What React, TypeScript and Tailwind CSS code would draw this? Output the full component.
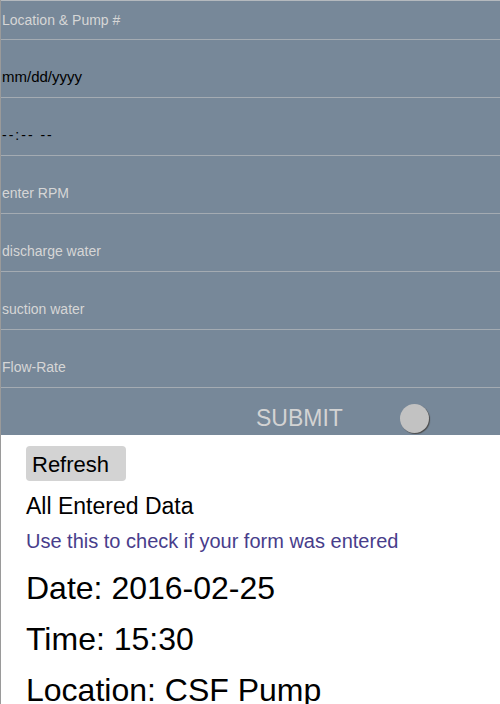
import React from "react";

const fields = [
  { text: "Location & Pump #", cls: "text-[14px] text-[#d6d6d6]" },
  { text: "mm/dd/yyyy", cls: "text-[15px] text-black" },
  { text: "--:-- --", cls: "text-[14px] text-black tracking-[2px]" },
  { text: "enter RPM", cls: "text-[14px] text-[#d6d6d6]" },
  { text: "discharge water", cls: "text-[14px] text-[#d6d6d6]" },
  { text: "suction water", cls: "text-[14px] text-[#d6d6d6]" },
  { text: "Flow-Rate", cls: "text-[14px] text-[#d6d6d6]" },
];

export default function App() {
  return (
    <div className="w-[500px] h-[704px] overflow-hidden bg-white border-l border-[#9a9a9a] font-['Liberation_Sans',Arial,sans-serif]">
      <div className="bg-[#778899] border-t border-[#b4b9be]">
        {fields.map((f, i) => (
          <div
            key={i}
            className={`${i === 0 ? "h-[39px]" : "mt-[18px] h-[40px]"} flex items-center pl-[1px] border-b border-[#a4abb2]`}
          >
            <span className={f.cls}>{f.text}</span>
          </div>
        ))}
        <div className="h-[47px] pt-[13px] flex items-center pl-[255px]">
          <span className="text-[23px] text-[#d3d3d3]">SUBMIT</span>
          <div className="ml-[57px] w-[29px] h-[29px] rounded-full bg-[#c2c2c2] shadow-[1px_1px_1px_#4a4a4a]" />
        </div>
      </div>
      <div className="pl-[25px]">
        <button className="mt-[11px] w-[100px] h-[35px] rounded-[4px] bg-[#d3d3d3] text-left pl-[6px] pt-[2px] text-[22px] text-black leading-none">
          Refresh
        </button>
        <div className="mt-[12px] text-[23px] leading-[26px] text-black">All Entered Data</div>
        <div className="mt-[10px] text-[20px] leading-[24px] text-[#483d8b]">
          Use this to check if your form was entered
        </div>
        <div className="mt-[10px] text-[32px] leading-[51px] text-black">
          <div>Date: 2016-02-25</div>
          <div>Time: 15:30</div>
          <div>Location: CSF Pump</div>
        </div>
      </div>
    </div>
  );
}
